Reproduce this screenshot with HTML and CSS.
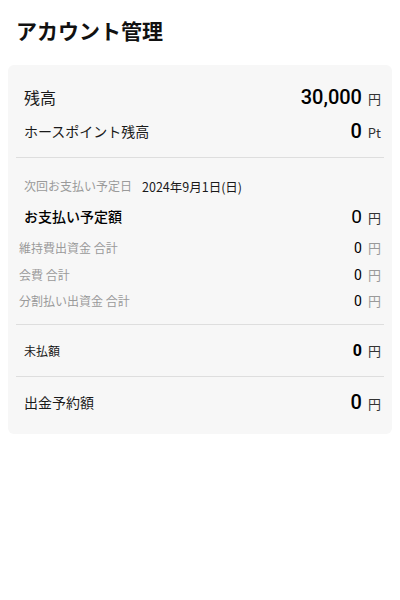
FILE: index.html
```html
<!DOCTYPE html>
<html lang="ja">
<head>
<meta charset="utf-8">
<link rel="stylesheet" href="styles.css">
</head>
<body>
<h1 class="title">アカウント管理</h1>
<div class="card">
  <div class="section sec-balance">
    <div class="row row-balance">
      <span class="label l16">残高</span>
      <span class="val"><span class="num n20">30,000</span><span class="unit">円</span></span>
    </div>
    <div class="row row-points">
      <span class="label l14">ホースポイント残高</span>
      <span class="val"><span class="num n20">0</span><span class="unit">Pt</span></span>
    </div>
  </div>
  <div class="divider"></div>
  <div class="section sec-pay">
    <div class="row row-date">
      <span class="label l12 grey">次回お支払い予定日</span>
      <span class="date">2024年9月1日(日)</span>
    </div>
    <div class="row row-paytotal">
      <span class="label l14 medium">お支払い予定額</span>
      <span class="val"><span class="num n19r">0</span><span class="unit">円</span></span>
    </div>
    <div class="row sub row-h28">
      <span class="label l12 grey">維持費出資金 合計</span>
      <span class="val"><span class="num n14">0</span><span class="unit grey">円</span></span>
    </div>
    <div class="row sub row-h26">
      <span class="label l12 grey">会費 合計</span>
      <span class="val"><span class="num n14">0</span><span class="unit grey">円</span></span>
    </div>
    <div class="row sub row-h26">
      <span class="label l12 grey">分割払い出資金 合計</span>
      <span class="val"><span class="num n14">0</span><span class="unit grey">円</span></span>
    </div>
  </div>
  <div class="divider"></div>
  <div class="row row-unpaid">
    <span class="label l12">未払額</span>
    <span class="val"><span class="num n16">0</span><span class="unit">円</span></span>
  </div>
  <div class="divider"></div>
  <div class="row row-withdraw">
    <span class="label l14">出金予約額</span>
    <span class="val"><span class="num n20">0</span><span class="unit">円</span></span>
  </div>
</div>
</body>
</html>
```
FILE: styles.css
```css
* { box-sizing: border-box; }
html, body { margin: 0; padding: 0; background: #ffffff; }
body {
  font-family: "Noto Sans CJK JP", "Noto Sans", sans-serif;
  color: #1a1a1a;
  width: 400px;
}
.title {
  margin: 0;
  padding: 15px 16px 0;
  height: 65px;
  font-size: 21px;
  font-weight: 700;
  line-height: 30px;
  color: #111;
}
.card {
  margin: 0 8px;
  background: #f7f7f7;
  border-radius: 6px;
  padding: 16px 8px 7px;
}
.sec-balance { padding-bottom: 8px; }
.sec-pay { padding-top: 16px; padding-bottom: 10px; }
.divider { height: 1px; background: #dedede; }
.row {
  display: flex;
  align-items: center;
  justify-content: space-between;
  padding: 0 3px 0 8px;
}
.row.sub { padding-left: 3px; }
.row-balance { height: 32px; }
.row-points { height: 36px; }
.row-date { height: 24px; justify-content: flex-start; }
.row-paytotal { height: 36px; }
.row-h28 { height: 28px; }
.row-h26 { height: 26px; }
.row-unpaid { height: 51px; }
.row-withdraw { height: 50px; }
.label { line-height: 1; }
.l16 { font-size: 16px; }
.l15 { font-size: 15px; }
.l14 { font-size: 14px; }
.l12 { font-size: 12px; }
.medium { font-weight: 500; color: #000; }
.grey { color: #9a9a9a; }
.date { font-size: 12.5px; margin-left: 10px; color: #1a1a1a; }
.val { display: flex; align-items: baseline; }
.num {
  font-family: "Roboto", "Noto Sans", sans-serif;
  font-weight: 400;
  color: #000;
  line-height: 1;
}
.n20 { font-size: 20px; font-weight: 500; }
.n19r { font-size: 19px; font-weight: 400; }
.n16 { font-size: 16px; font-weight: 700; }
.n14 { font-size: 14px; font-weight: 400; }
.unit {
  font-size: 13px;
  margin-left: 6px;
  color: #333;
  line-height: 1;
}
.unit.grey { color: #9a9a9a; }
```
